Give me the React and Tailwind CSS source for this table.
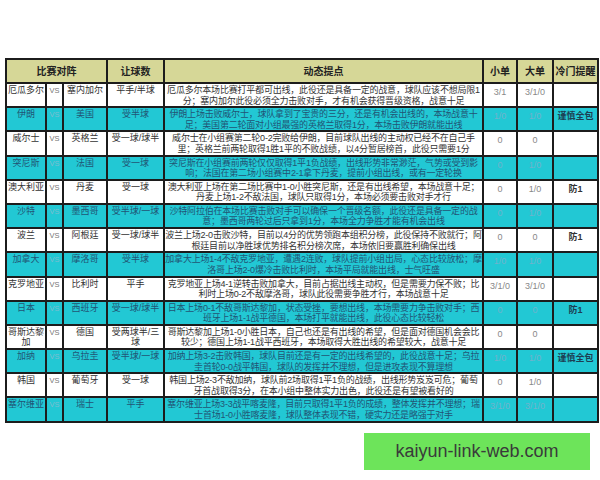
import React from "react";

const rows = [
  ["厄瓜多尔", "塞内加尔", "平手/半球", "厄瓜多尔本场比赛打平都可出线，此役还是具备一定的战意，球队应该不想局限1分；塞内加尔此役必须全力击败对手，才有机会获得晋级资格，战意十足", "3/1", "3/1/0", "", false],
  ["伊朗", "美国", "受半球", "伊朗上场击败威尔士，球队拿到了宝贵的三分，还是有机会出线的，本场战意十足；美国第二轮面对小组最强的英格兰取得1分，本场击败伊朗就能出线", "1/0", "1/0", "谨慎全包", true],
  ["威尔士", "英格兰", "受一球/球半", "威尔士在小组赛第二轮0-2完败给伊朗，目前球队出线的主动权已经不在自己手里；英格兰前两轮取得1胜1平的不败战绩，以4分暂居榜首，此役只需要1分", "0", "0", "", false],
  ["突尼斯", "法国", "受一球", "突尼斯在小组赛前两轮仅仅取得1平1负战绩，出线形势非常渺茫，气势或受到影响；法国在第二场小组赛中2-1拿下丹麦，提前小组出线，或有一定轮换", "0", "1/0", "", true],
  ["澳大利亚", "丹麦", "受一球", "澳大利亚上场在第二场比赛中1-0小胜突尼斯，还是有出线希望，本场战意十足；丹麦上场1-2不敌法国，球队只取得1分，本场必须要击败对手才行", "0", "1/0", "防1", false],
  ["沙特", "墨西哥", "受半球/一球", "沙特阿拉伯在本场比赛击败对手可以确保一个晋级名额，此役还是具备一定的战意；墨西哥两轮过后只拿到1分，本场全力争胜才能有机会出线", "0", "1/0", "", true],
  ["波兰", "阿根廷", "受一球/球半", "波兰上场2-0击败沙特，目前以4分的优势领跑本组积分榜，此役保持不败就行；阿根廷目前以净胜球优势排名积分榜次席，本场依旧要赢胜利确保出线", "0", "0", "防1", false],
  ["加拿大", "摩洛哥", "受半球", "加拿大上场1-4不敌克罗地亚，遭遇2连败，球队提前小组出局，心态比较放松；摩洛哥上场2-0爆冷击败比利时，本场平局就能出线，士气旺盛", "1/0", "1/0", "", true],
  ["克罗地亚", "比利时", "平手", "克罗地亚上场4-1逆转击败加拿大，目前占据出线主动权，但是需要力保不败；比利时上场0-2不敌摩洛哥，球队此役需要争胜才行，本场战意十足", "3/1/0", "3/1/0", "", false],
  ["日本", "西班牙", "受一球/球半", "日本上场0-1不敌哥斯达黎加，状态受挫，要想出线，本场需要力争击败对手；西班牙上场1-1战平德国，本场打平就能出线，此役心态比较轻松", "0", "0", "防1", true],
  ["哥斯达黎加", "德国", "受两球半/三球", "哥斯达黎加上场1-0小胜日本，自己也还是有出线的希望，但是面对德国机会会比较少；德国上场1-1战平西班牙，本场取得大胜出线的希望较大，战意十足", "0", "0", "", false],
  ["加纳", "乌拉圭", "受半球/一球", "加纳上场3-2击败韩国，球队目前还是有一定的出线希望的，此役战意十足；乌拉圭首轮0-0战平韩国，球队的发挥并不理想，但是进攻表现不算理想", "1/0", "1/0", "谨慎全包", true],
  ["韩国", "葡萄牙", "受一球", "韩国上场2-3不敌加纳，球队前2场取得1平1负的战绩，出线形势岌岌可危；葡萄牙首战取得3分，在本小组中整体实力出色，此役还是有望被看好的", "0", "1/0", "", false],
  ["塞尔维亚", "瑞士", "平手", "塞尔维亚上场3-3战平喀麦隆，目前只取得1平1负的成绩，整体发挥并不理想；瑞士首场1-0小胜喀麦隆，球队整体表现不错，硬实力还是略强于对手", "3/1/0", "3/1/0", "", true],
];

const cell = "border-2 border-[#1c1c1c] align-top text-center p-0";

function C({ className = "", inner = "pt-[1px]", children }) {
  return (
    <td className={`${cell} ${className}`}>
      <div className={`h-[22.2px] overflow-hidden leading-[10.5px] ${inner}`}>{children}</div>
    </td>
  );
}

export default function App() {
  return (
    <div
      className="w-[600px] h-[480px] bg-white overflow-hidden pt-[58px] pl-[5px]"
      style={{ fontFamily: '"Liberation Sans", "Noto Sans CJK SC", sans-serif' }}
    >
      <table className="table-fixed border-collapse w-[592px] text-[9px]">
        <colgroup>
          <col className="w-[40px]" />
          <col className="w-[17px]" />
          <col className="w-[44px]" />
          <col className="w-[57px]" />
          <col className="w-[319px]" />
          <col className="w-[34px]" />
          <col className="w-[36px]" />
          <col className="w-[45px]" />
        </colgroup>
        <thead>
          <tr className="bg-[#d6d797] text-[#222] font-bold text-[10px]">
            <th colSpan={3} className="border-2 border-[#1c1c1c] p-0"><div className="h-[22px] flex items-center justify-center">比赛对阵</div></th>
            <th className="border-2 border-[#1c1c1c] p-0"><div className="h-[22px] flex items-center justify-center">让球数</div></th>
            <th className="border-2 border-[#1c1c1c] p-0"><div className="h-[22px] flex items-center justify-center">动态提点</div></th>
            <th className="border-2 border-[#1c1c1c] p-0"><div className="h-[22px] flex items-center justify-center">小单</div></th>
            <th className="border-2 border-[#1c1c1c] p-0"><div className="h-[22px] flex items-center justify-center">大单</div></th>
            <th className="border-2 border-[#1c1c1c] p-0"><div className="h-[22px] flex items-center justify-center">冷门提醒</div></th>
          </tr>
        </thead>
        <tbody>
          {rows.map((r, i) => {
            const cyan = r[7];
            const bg = cyan ? "bg-[#22c8d4] text-[#215574]" : "bg-white text-[#333]";
            const num = cyan ? "text-[#6fb3cc]" : "text-[#888]";
            return (
              <tr key={i} className={bg}>
                <C>{r[0]}</C>
                <C className={`text-[7.5px] ${cyan ? "text-[#7dbdd0]" : "text-[#777]"}`} inner="pt-[2px]">VS</C>
                <C>{r[1]}</C>
                <C>{r[2]}</C>
                <C className="tracking-[-0.2px]">{r[3]}</C>
                <C className={num} inner="pt-[3px]">{r[4]}</C>
                <C className={num} inner="pt-[3px]">{r[5]}</C>
                <C className={`font-bold ${cyan ? "text-[#1d3e52]" : "text-[#333]"}`} inner="pt-[3px]">{r[6]}</C>
              </tr>
            );
          })}
        </tbody>
      </table>
      <div className="flex justify-end pr-[10px] mt-[10px]">
        <div className="w-[226px] h-[37px] bg-[#6de45a] flex items-center justify-center text-[18px] text-[#3a3a3a]">
          kaiyun-link-web.com
        </div>
      </div>
    </div>
  );
}
